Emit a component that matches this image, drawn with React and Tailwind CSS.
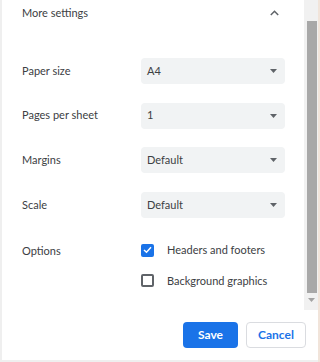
import React from "react";

const font = { fontFamily: 'Lato, "Noto Sans", sans-serif' };

function Caret() {
  return (
    <svg width="7" height="4" viewBox="0 0 7 4" className="shrink-0">
      <path d="M0 0 L7 0 L3.5 4 Z" fill="#5f6368" />
    </svg>
  );
}

function Select({ value }) {
  return (
    <div className="w-[144px] h-[26px] rounded-[4px] bg-[#f1f3f4] flex items-center justify-between pl-[6px] pr-[8px]">
      <span className="text-[11px] text-[#3c4043]">{value}</span>
      <Caret />
    </div>
  );
}

function Row({ label, value }) {
  return (
    <div className="flex items-center h-[26px]">
      <div className="w-[119px] text-[11px] text-[#3c4043]">{label}</div>
      <Select value={value} />
    </div>
  );
}

export default function App() {
  return (
    <div className="w-[320px] h-[362px] flex bg-white overflow-hidden" style={font}>
      <div className="w-[2px] h-full bg-[#efefef]" />
      <div className="flex-1 flex flex-col">
        <div className="h-[310px] flex">
          <div className="flex-1 flex flex-col pl-[20px]">
            <div className="h-[26px] flex items-center justify-between pr-[25px]">
              <span className="text-[11px] text-[#3c4043]">More settings</span>
              <svg width="9" height="6" viewBox="0 0 9 6">
                <path d="M0.8 5 L4.5 1.3 L8.2 5" fill="none" stroke="#5f6368" strokeWidth="1.5" />
              </svg>
            </div>
            <div className="flex flex-col gap-[18.6px] mt-[32px]">
              <Row label="Paper size" value="A4" />
              <Row label="Pages per sheet" value="1" />
              <Row label="Margins" value="Default" />
              <Row label="Scale" value="Default" />
            </div>
            <div className="flex mt-[26px]">
              <div className="w-[119px] text-[11px] text-[#3c4043] leading-[16px] mt-[-1px]">Options</div>
              <div className="flex flex-col gap-[17.5px]">
                <div className="flex items-center h-[13px]">
                  <div className="w-[13px] h-[13px] rounded-[2px] bg-[#1a73e8] flex items-center justify-center">
                    <svg width="9" height="8" viewBox="0 0 9 8">
                      <path d="M1 4 L3.5 6.3 L8 1.2" fill="none" stroke="white" strokeWidth="1.5" />
                    </svg>
                  </div>
                  <span className="ml-[13px] text-[11px] text-[#3c4043]">Headers and footers</span>
                </div>
                <div className="flex items-center h-[13px]">
                  <div className="w-[13px] h-[13px] rounded-[2px] border-2 border-[#5f6368]" />
                  <span className="ml-[13px] text-[11px] text-[#3c4043]">Background graphics</span>
                </div>
              </div>
            </div>
          </div>
          <div className="w-[14px] h-full bg-[#f1f1f1] flex flex-col items-center">
            <div className="h-[21px]" />
            <div className="w-[10px] h-[272px] bg-[#a8a8a8] ml-[1px]" />
            <div className="mt-[5px]">
              <svg width="7" height="4" viewBox="0 0 7 4">
                <path d="M0 0 L7 0 L3.5 4 Z" fill="#a3a3a3" />
              </svg>
            </div>
          </div>
        </div>
        <div className="flex-1 flex justify-end items-start pt-[12px] pr-[12px] gap-[8px]">
          <div className="w-[55px] h-[26px] rounded-[4px] bg-[#1a73e8] flex items-center justify-center text-[12px] font-bold text-white">
            Save
          </div>
          <div className="w-[60px] h-[26px] rounded-[4px] border border-[#dadce0] flex items-center justify-center text-[12px] font-bold text-[#1a73e8]">
            Cancel
          </div>
        </div>
        <div className="h-[2px] bg-[#efefef]" />
      </div>
      <div className="w-[2px] h-full bg-[#f1e4da]" />
    </div>
  );
}
